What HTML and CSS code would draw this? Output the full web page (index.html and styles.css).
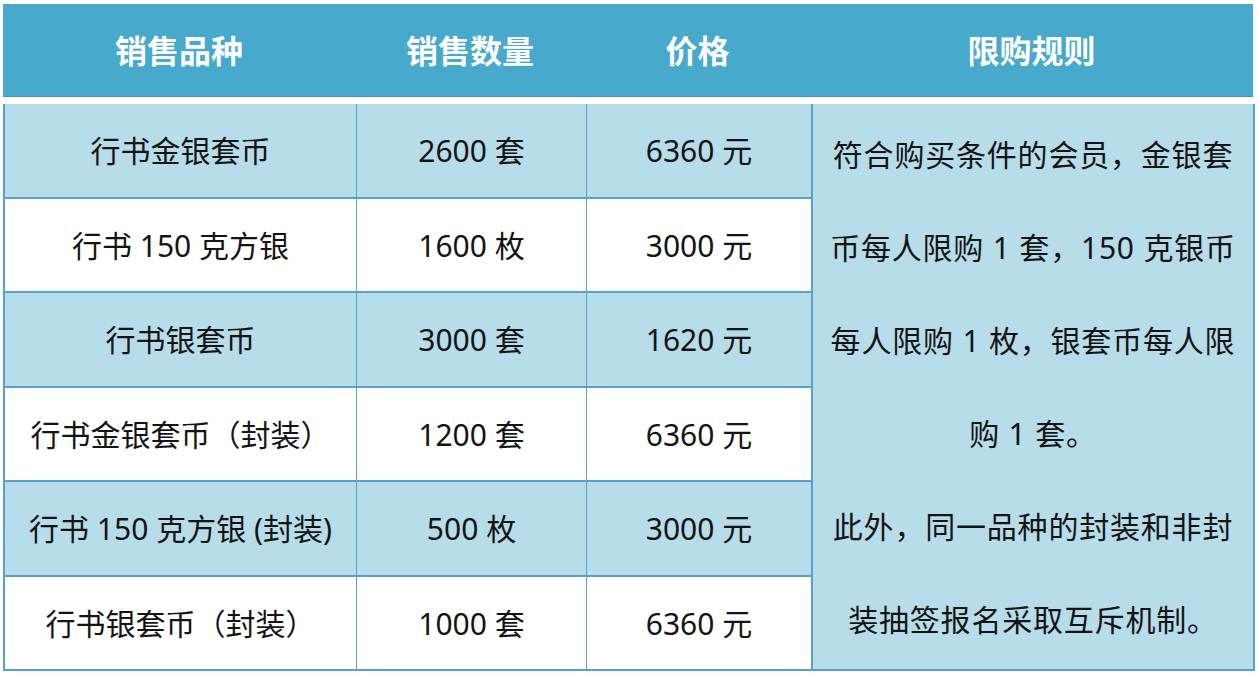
FILE: index.html
```html
<!DOCTYPE html>
<html lang="zh-CN">
<head>
<meta charset="utf-8">
<title>销售品种</title>
<link rel="stylesheet" href="styles.css">
</head>
<body>
<div class="sheet">
  <div class="head">
    <div class="hcell">销售品种</div>
    <div class="hcell">销售数量</div>
    <div class="hcell">价格</div>
    <div class="hcell">限购规则</div>
  </div>
  <div class="grid">
    <div class="cell shade">行书金银套币</div>
    <div class="cell shade">2600 套</div>
    <div class="cell shade">6360 元</div>
    <div class="rules">
      <p>符合购买条件的会员，金银套<br>币每人限购 1 套，150 克银币<br>每人限购 1 枚，银套币每人限<br>购 1 套。</p>
      <p>此外，同一品种的封装和非封<br>装抽签报名采取互斥机制。</p>
    </div>

    <div class="cell">行书 150 克方银</div>
    <div class="cell">1600 枚</div>
    <div class="cell">3000 元</div>

    <div class="cell shade">行书银套币</div>
    <div class="cell shade">3000 套</div>
    <div class="cell shade">1620 元</div>

    <div class="cell">行书金银套币（封装）</div>
    <div class="cell">1200 套</div>
    <div class="cell">6360 元</div>

    <div class="cell shade">行书 150 克方银 (封装)</div>
    <div class="cell shade">500 枚</div>
    <div class="cell shade">3000 元</div>

    <div class="cell">行书银套币（封装）</div>
    <div class="cell">1000 套</div>
    <div class="cell">6360 元</div>
  </div>
</div>
</body>
</html>
```

FILE: styles.css
```css
html, body {
  margin: 0;
  padding: 0;
  background: #ffffff;
}

body {
  font-family: "Noto Sans", "Noto Sans CJK SC", sans-serif;
  color: #141414;
}

.sheet {
  padding: 4px 0 0 3px;
  width: 1250px;
}

.head {
  display: grid;
  grid-template-columns: 352px 230px 225px 443px;
  height: 93px;
  background: #47a9cb;
  border-bottom: 1px solid #3d97bb;
  box-sizing: border-box;
}

.hcell {
  display: flex;
  align-items: center;
  justify-content: center;
  color: #ffffff;
  font-family: "Noto Sans CJK SC", sans-serif;
  font-weight: 700;
  font-size: 32px;
  padding-bottom: 2px;
}

.grid {
  margin-top: 7px;
  display: grid;
  grid-template-columns: 352px 230px 225px 443px;
  grid-template-rows: repeat(6, 94.5px);
  border-left: 2px solid #56a2ca;
  box-sizing: border-box;
}

.cell {
  display: flex;
  align-items: center;
  justify-content: center;
  font-size: 30px;
  background: #ffffff;
  border-right: 1px solid #56a2ca;
  border-bottom: 2px solid #56a2ca;
  white-space: nowrap;
  padding-bottom: 2px;
}

.cell.shade {
  background: #b7dcea;
}

.rules {
  grid-column: 4;
  grid-row: 1 / span 6;
  background: #b7dcea;
  border-left: 1px solid #56a2ca;
  border-right: 2px solid #56a2ca;
  border-bottom: 2px solid #56a2ca;
  display: flex;
  flex-direction: column;
  justify-content: center;
  align-items: center;
  font-size: 30px;
  letter-spacing: 0.8px;
  line-height: 93px;
  text-align: center;
  white-space: nowrap;
}

.rules p {
  margin: 0;
}
```
